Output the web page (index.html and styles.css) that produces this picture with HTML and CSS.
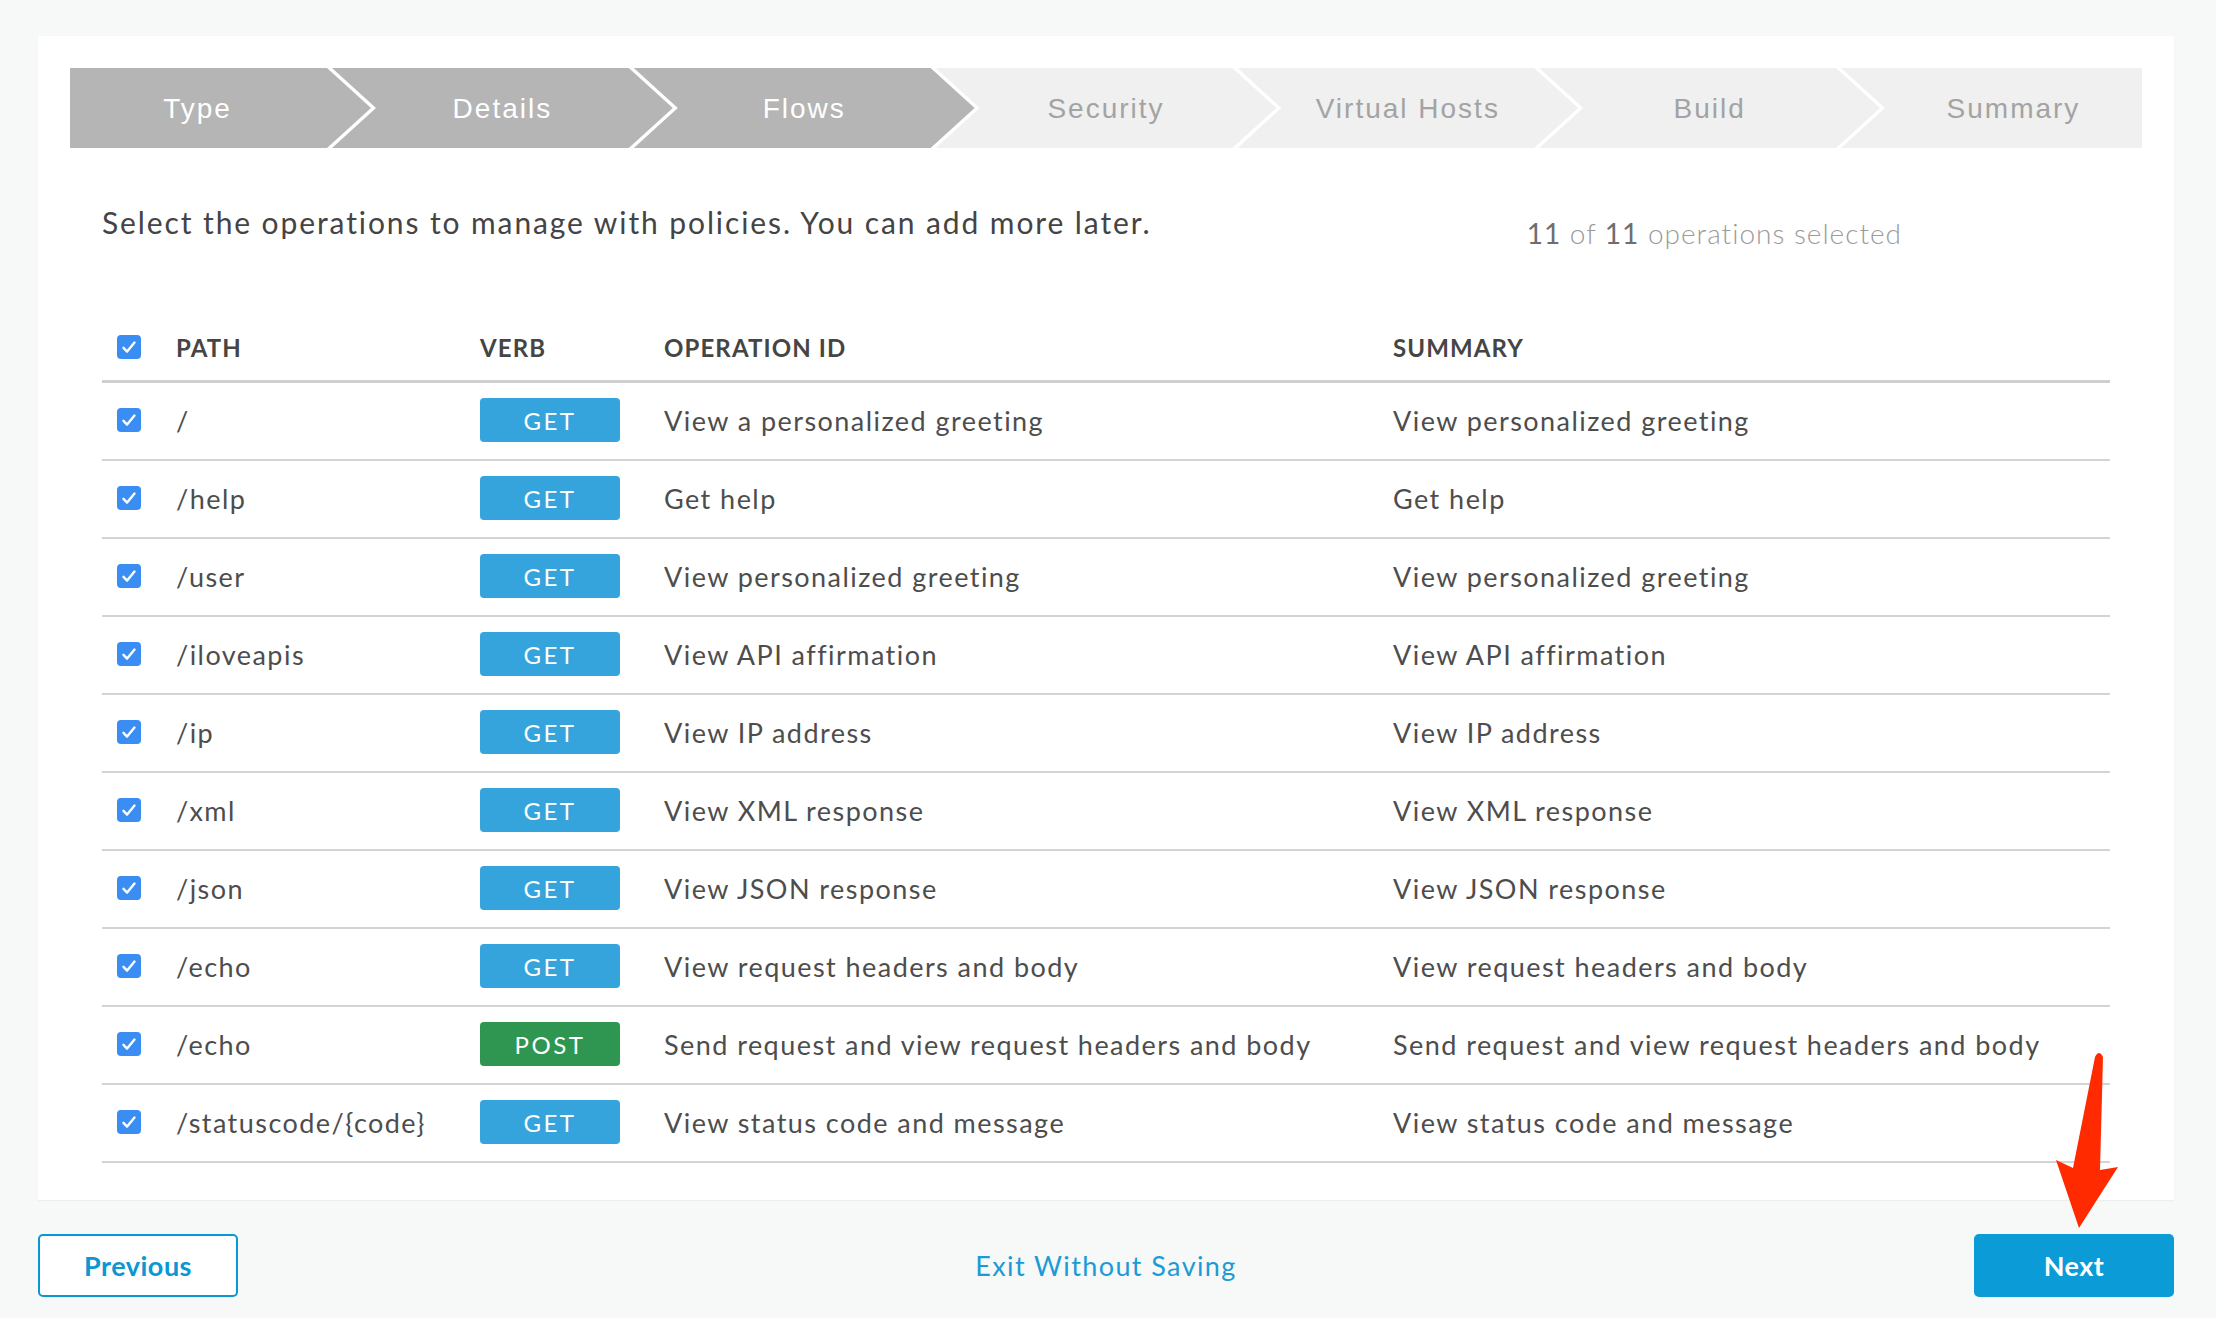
FILE: index.html
```html
<!DOCTYPE html>
<html lang="en">
<head>
<meta charset="utf-8">
<title>Flows</title>
<link rel="stylesheet" href="styles.css">
</head>
<body>
<div class="page">
  <section class="panel">
    <ol class="stepper">
      <li class="step done first"><span>Type</span></li>
      <li class="step done"><span>Details</span></li>
      <li class="step done"><span>Flows</span></li>
      <li class="step"><span>Security</span></li>
      <li class="step"><span>Virtual Hosts</span></li>
      <li class="step"><span>Build</span></li>
      <li class="step last"><span>Summary</span></li>
    </ol>

    <div class="intro">
      <p class="intro-text">Select the operations to manage with policies. You can add more later.</p>
      <p class="count"><b>11</b> of <b>11</b> operations selected</p>
    </div>

    <div class="ops">
      <div class="row head">
        <span class="cell"><span class="cb"><svg viewBox="0 0 24 24"><rect width="24" height="24" rx="4"/><path d="M6.5 12.8l3.6 3.8 7.4-9"/></svg></span></span>
        <span class="cell">PATH</span>
        <span class="cell">VERB</span>
        <span class="cell">OPERATION ID</span>
        <span class="cell">SUMMARY</span>
      </div>

      <div class="row">
        <span class="cell"><span class="cb"><svg viewBox="0 0 24 24"><rect width="24" height="24" rx="4"/><path d="M6.5 12.8l3.6 3.8 7.4-9"/></svg></span></span>
        <span class="cell">/</span>
        <span class="cell"><span class="verb get">GET</span></span>
        <span class="cell">View a personalized greeting</span>
        <span class="cell">View personalized greeting</span>
      </div>
      <div class="row">
        <span class="cell"><span class="cb"><svg viewBox="0 0 24 24"><rect width="24" height="24" rx="4"/><path d="M6.5 12.8l3.6 3.8 7.4-9"/></svg></span></span>
        <span class="cell">/help</span>
        <span class="cell"><span class="verb get">GET</span></span>
        <span class="cell">Get help</span>
        <span class="cell">Get help</span>
      </div>
      <div class="row">
        <span class="cell"><span class="cb"><svg viewBox="0 0 24 24"><rect width="24" height="24" rx="4"/><path d="M6.5 12.8l3.6 3.8 7.4-9"/></svg></span></span>
        <span class="cell">/user</span>
        <span class="cell"><span class="verb get">GET</span></span>
        <span class="cell">View personalized greeting</span>
        <span class="cell">View personalized greeting</span>
      </div>
      <div class="row">
        <span class="cell"><span class="cb"><svg viewBox="0 0 24 24"><rect width="24" height="24" rx="4"/><path d="M6.5 12.8l3.6 3.8 7.4-9"/></svg></span></span>
        <span class="cell">/iloveapis</span>
        <span class="cell"><span class="verb get">GET</span></span>
        <span class="cell">View API affirmation</span>
        <span class="cell">View API affirmation</span>
      </div>
      <div class="row">
        <span class="cell"><span class="cb"><svg viewBox="0 0 24 24"><rect width="24" height="24" rx="4"/><path d="M6.5 12.8l3.6 3.8 7.4-9"/></svg></span></span>
        <span class="cell">/ip</span>
        <span class="cell"><span class="verb get">GET</span></span>
        <span class="cell">View IP address</span>
        <span class="cell">View IP address</span>
      </div>
      <div class="row">
        <span class="cell"><span class="cb"><svg viewBox="0 0 24 24"><rect width="24" height="24" rx="4"/><path d="M6.5 12.8l3.6 3.8 7.4-9"/></svg></span></span>
        <span class="cell">/xml</span>
        <span class="cell"><span class="verb get">GET</span></span>
        <span class="cell">View XML response</span>
        <span class="cell">View XML response</span>
      </div>
      <div class="row">
        <span class="cell"><span class="cb"><svg viewBox="0 0 24 24"><rect width="24" height="24" rx="4"/><path d="M6.5 12.8l3.6 3.8 7.4-9"/></svg></span></span>
        <span class="cell">/json</span>
        <span class="cell"><span class="verb get">GET</span></span>
        <span class="cell">View JSON response</span>
        <span class="cell">View JSON response</span>
      </div>
      <div class="row">
        <span class="cell"><span class="cb"><svg viewBox="0 0 24 24"><rect width="24" height="24" rx="4"/><path d="M6.5 12.8l3.6 3.8 7.4-9"/></svg></span></span>
        <span class="cell">/echo</span>
        <span class="cell"><span class="verb get">GET</span></span>
        <span class="cell">View request headers and body</span>
        <span class="cell">View request headers and body</span>
      </div>
      <div class="row">
        <span class="cell"><span class="cb"><svg viewBox="0 0 24 24"><rect width="24" height="24" rx="4"/><path d="M6.5 12.8l3.6 3.8 7.4-9"/></svg></span></span>
        <span class="cell">/echo</span>
        <span class="cell"><span class="verb post">POST</span></span>
        <span class="cell">Send request and view request headers and body</span>
        <span class="cell">Send request and view request headers and body</span>
      </div>
      <div class="row">
        <span class="cell"><span class="cb"><svg viewBox="0 0 24 24"><rect width="24" height="24" rx="4"/><path d="M6.5 12.8l3.6 3.8 7.4-9"/></svg></span></span>
        <span class="cell">/statuscode/{code}</span>
        <span class="cell"><span class="verb get">GET</span></span>
        <span class="cell">View status code and message</span>
        <span class="cell">View status code and message</span>
      </div>
    </div>
  </section>

  <footer class="footer">
    <button class="btn btn-outline">Previous</button>
    <a class="exit" href="#">Exit Without Saving</a>
    <button class="btn btn-primary">Next</button>
  </footer>

  <svg class="callout" viewBox="0 0 75 185" width="75" height="185">
    <path d="M45 9 Q49 1 53 9 L50 122 L68 119 L29 180 L6 112 L23 120 Z"/>
  </svg>
</div>
</body>
</html>
```

FILE: styles.css
```css
* { box-sizing: border-box; }

html, body {
  margin: 0;
  padding: 0;
  background: #f7f8f8;
}

body {
  font-family: Lato, "Open Sans", "Liberation Sans", sans-serif;
  color: #4a4a4a;
}

.page {
  position: relative;
  width: 2216px;
  height: 1318px;
  padding: 36px 42px 0 38px;
}

.panel {
  background: #ffffff;
  height: 1164px;
  padding: 32px 32px 37px;
  box-shadow: 0 1px 1px rgba(0, 0, 0, 0.04);
}

/* Stepper */
.stepper {
  list-style: none;
  margin: 0;
  padding: 0;
  display: flex;
  height: 80px;
}

.step {
  flex: 1 1 0;
  margin-left: -39px;
  height: 80px;
  display: flex;
  align-items: center;
  justify-content: center;
  padding-top: 2px;
  background: #f0f0f0;
  color: #a3a3a3;
  font-family: "Liberation Sans", Arial, sans-serif;
  font-size: 28px;
  letter-spacing: 2px;
  clip-path: polygon(0 0, calc(100% - 44px) 0, 100% 50%, calc(100% - 44px) 100%, 0 100%, 44px 50%);
}

.step.done {
  background: #b5b5b5;
  color: #ffffff;
}

.step.first {
  flex: 0 0 301px;
  margin-left: 0;
  padding-right: 46px;
  clip-path: polygon(0 0, calc(100% - 44px) 0, 100% 50%, calc(100% - 44px) 100%, 0 100%);
}

.step.last {
  flex: 0 0 301px;
  padding-left: 44px;
  clip-path: polygon(0 0, 100% 0, 100% 100%, 0 100%, 44px 50%);
}

/* Intro */
.intro {
  display: flex;
  align-items: flex-start;
  margin: 54px 32px 0;
  height: 40px;
}

.intro-text {
  margin: 0;
  font-size: 30px;
  line-height: 40px;
  letter-spacing: 1.9px;
  color: #444;
}

.count {
  margin: 11px 208px 0 auto;
  font-size: 28px;
  line-height: 40px;
  letter-spacing: 1px;
  color: #9a9a9a;
  font-weight: 300;
}

.count b {
  font-weight: 400;
  color: #6e6e6e;
}

/* Operations table */
.ops {
  margin: 72px 32px 0;
}

.row {
  display: grid;
  grid-template-columns: 74px 304px 184px 729px 1fr;
  align-items: center;
  height: 78px;
  padding-bottom: 2px;
  border-bottom: 2px solid #d3d3d3;
  font-size: 27px;
  letter-spacing: 1.45px;
  color: #4d4d4d;
}

.row.head {
  height: 69px;
  padding-bottom: 0;
  border-bottom: 3px solid #cfcfcf;
  font-size: 24px;
  font-weight: 700;
  letter-spacing: 1.1px;
  color: #454545;
}

.cell {
  white-space: nowrap;
}

.cb {
  display: block;
  width: 24px;
  height: 24px;
  margin-left: 15px;
}

.cb svg {
  display: block;
  width: 24px;
  height: 24px;
}

.cb rect { fill: #3a8ef3; }

.cb path {
  fill: none;
  stroke: #ffffff;
  stroke-width: 2.4;
  stroke-linecap: round;
  stroke-linejoin: round;
}

.verb {
  display: flex;
  align-items: center;
  justify-content: center;
  width: 140px;
  height: 44px;
  border-radius: 4px;
  color: #ffffff;
  font-size: 24px;
  letter-spacing: 2.5px;
}

.verb.get { background: #35a4dc; }
.verb.post { background: #2e9650; }

/* Footer */
.footer {
  display: flex;
  align-items: center;
  justify-content: space-between;
  padding-top: 34px;
}

.btn {
  width: 200px;
  height: 63px;
  border-radius: 5px;
  font-family: Lato, "Open Sans", sans-serif;
  font-size: 27px;
  font-weight: 700;
  letter-spacing: 0.5px;
  cursor: pointer;
}

.btn-outline {
  background: #ffffff;
  border: 2px solid #0b97d3;
  color: #0b97d3;
}

.btn-primary {
  background: #0b9bd6;
  border: 2px solid #0b9bd6;
  color: #ffffff;
}

.exit {
  color: #1a9bd7;
  font-size: 27px;
  letter-spacing: 1.4px;
  text-decoration: none;
}

.callout {
  position: absolute;
  left: 2050px;
  top: 1048px;
}

.callout path {
  fill: #ff2a00;
}
```
